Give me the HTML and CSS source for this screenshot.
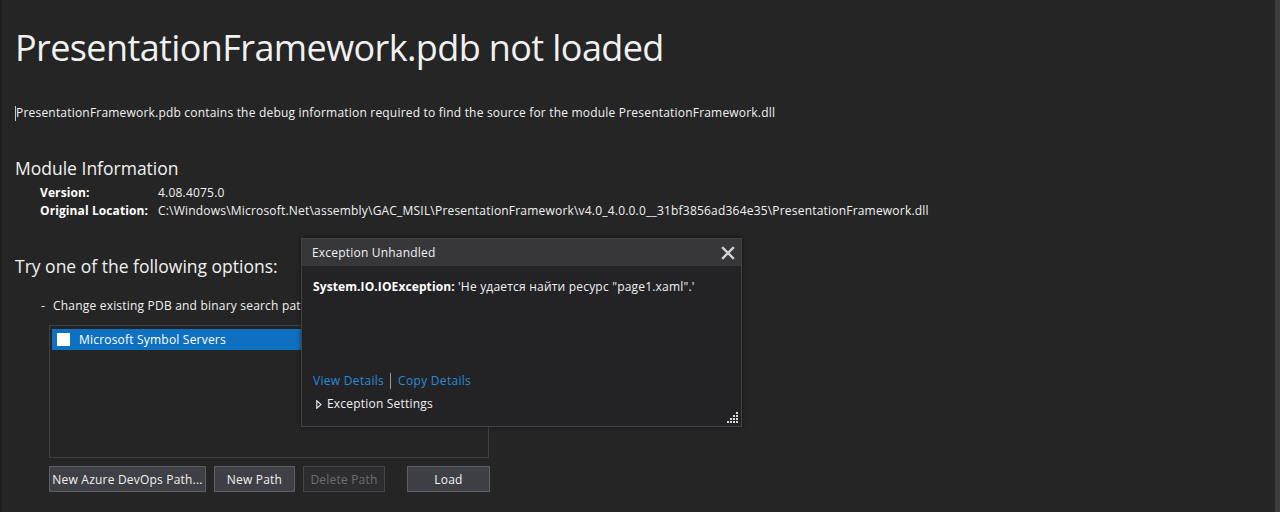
FILE: index.html
```html
<!DOCTYPE html>
<html lang="en">
<head>
<meta charset="utf-8">
<title>PresentationFramework.pdb not loaded</title>
<link rel="stylesheet" href="styles.css">
</head>
<body>
<div class="page">
  <h1 class="title">PresentationFramework.pdb not loaded</h1>
  <p class="desc"><span class="caret"></span>PresentationFramework.pdb contains the debug information required to find the source for the module PresentationFramework.dll</p>
  <h2 class="section module">Module Information</h2>
  <div class="info">
    <span class="label">Version:</span><span class="value">4.08.4075.0</span>
    <span class="label">Original Location:</span><span class="value">C:\Windows\Microsoft.Net\assembly\GAC_MSIL\PresentationFramework\v4.0_4.0.0.0__31bf3856ad364e35\PresentationFramework.dll</span>
  </div>
  <h2 class="section try">Try one of the following options:</h2>
  <div class="option"><span class="dash">-</span>Change existing PDB and binary search paths and retry loading:</div>
  <div class="listbox">
    <div class="item selected"><span class="check"></span><span class="item-text">Microsoft Symbol Servers</span></div>
  </div>
  <div class="buttons">
    <button class="btn azure">New Azure DevOps Path...</button>
    <button class="btn newpath">New Path</button>
    <button class="btn delete" disabled>Delete Path</button>
    <button class="btn load">Load</button>
  </div>
</div>

<div class="dialog">
  <div class="dialog-head">
    <span class="dialog-title">Exception Unhandled</span>
    <svg class="close" width="14" height="14" viewBox="0 0 14 14"><path d="M2 2 L12 12 M12 2 L2 12" stroke="#d4d4d4" stroke-width="2.4" stroke-linecap="square" fill="none"/></svg>
  </div>
  <div class="dialog-body">
    <p class="message"><b>System.IO.IOException:</b> 'Не удается найти ресурс "page1.xaml".'</p>
    <div class="links"><a class="link">View Details</a><span class="sep"></span><a class="link">Copy Details</a></div>
    <div class="settings"><svg class="tri" width="6" height="9" viewBox="0 0 6 9"><path d="M0.75 0.75 L5 4.5 L0.75 8.25 Z" fill="none" stroke="#e0e0e0" stroke-width="1.2"/></svg><span>Exception Settings</span></div>
    <svg class="grip" width="11" height="11" viewBox="0 0 11 11">
      <g fill="#d8d8d8">
        <rect x="9" y="0" width="2" height="2"/>
        <rect x="6" y="3" width="2" height="2"/><rect x="9" y="3" width="2" height="2"/>
        <rect x="3" y="6" width="2" height="2"/><rect x="6" y="6" width="2" height="2"/><rect x="9" y="6" width="2" height="2"/>
        <rect x="0" y="9" width="2" height="2"/><rect x="3" y="9" width="2" height="2"/><rect x="6" y="9" width="2" height="2"/><rect x="9" y="9" width="2" height="2"/>
      </g>
    </svg>
  </div>
</div>
</body>
</html>
```

FILE: styles.css
```css
html, body {
  margin: 0;
  padding: 0;
  height: 100%;
  background: #252526;
  overflow: hidden;
}

body {
  font-family: "Open Sans", "Noto Sans", sans-serif;
  color: #f1f1f1;
  letter-spacing: 0.2px;
}

.page {
  box-sizing: border-box;
  height: 512px;
  padding: 0 0 0 15px;
  border-left: 2px solid #1f1f20;
  border-right: 5px solid #3d3d40;
  display: flex;
  flex-direction: column;
  align-items: flex-start;
}

.title {
  margin: 24px 0 0 -2px;
  font-size: 36px;
  line-height: 48px;
  font-weight: 400;
  letter-spacing: -0.6px;
  color: #f1f1f1;
}

.desc {
  margin: 33px 0 0 -2px;
  font-size: 12px;
  line-height: 16px;
  height: 16px;
  color: #f1f1f1;
  display: flex;
  align-items: center;
  white-space: nowrap;
}

.caret {
  display: inline-block;
  width: 1px;
  height: 15px;
  background: #c8c8c8;
}

.section {
  margin: 0 0 0 -2px;
  font-size: 17.5px;
  line-height: 22px;
  font-weight: 400;
  letter-spacing: 0;
  color: #f1f1f1;
}

.module { margin-top: 36px; }
.try { margin-top: 35px; }

.info {
  margin: 5px 0 0 23px;
  display: grid;
  grid-template-columns: 118px auto;
  font-size: 12px;
  line-height: 18px;
  white-space: nowrap;
}

.label { font-weight: 700; color: #ffffff; letter-spacing: 0.1px; }
.value { color: #f1f1f1; }

.option {
  margin: 21px 0 0 24px;
  font-size: 12px;
  line-height: 16px;
  white-space: nowrap;
}

.dash { display: inline-block; width: 12px; }

.listbox {
  box-sizing: border-box;
  margin: 11px 0 0 32px;
  width: 440px;
  height: 133px;
  border: 1px solid #3f3f46;
  padding: 3px 2px;
}

.item {
  height: 21px;
  display: flex;
  align-items: center;
  font-size: 12px;
}

.selected { background: #0e70c0; color: #ffffff; }

.check {
  box-sizing: border-box;
  width: 13px;
  height: 13px;
  background: #ffffff;
  margin: 0 9px 0 5px;
}

.buttons {
  margin: 8px 0 0 32px;
  display: flex;
  gap: 8px;
}

.btn {
  box-sizing: border-box;
  height: 26px;
  padding: 0;
  font-family: inherit;
  font-size: 12px;
  letter-spacing: 0.2px;
  color: #f1f1f1;
  background: #3f3f46;
  border: 1px solid #5e5e63;
}

.azure { width: 157px; }
.newpath { width: 81px; }
.delete {
  width: 82px;
  background: #2d2d30;
  border-color: #46464a;
  color: #6d6d6d;
}
.load { width: 83px; margin-left: 14px; }

/* Exception popup */
.dialog {
  position: absolute;
  left: 301px;
  top: 238px;
  box-sizing: border-box;
  width: 441px;
  height: 189px;
  border: 1px solid #434346;
  background: #232325;
  display: flex;
  flex-direction: column;
  box-shadow: 0 0 4px rgba(0,0,0,0.5);
}

.dialog-head {
  height: 27px;
  background: #37373a;
  display: flex;
  align-items: center;
  justify-content: space-between;
  padding: 0 6px 0 10px;
  flex-shrink: 0;
}

.dialog-title { font-size: 12px; color: #f1f1f1; }

.close { display: block; }

.dialog-body {
  position: relative;
  flex: 1;
  padding: 0 0 0 11px;
  display: flex;
  flex-direction: column;
  align-items: flex-start;
}

.message {
  margin: 13px 0 0 0;
  font-size: 12px;
  line-height: 16px;
  color: #f1f1f1;
}

.message b { color: #ffffff; letter-spacing: 0.1px; }

.links {
  margin: 78px 0 0 0;
  display: flex;
  align-items: center;
  font-size: 12px;
  line-height: 16px;
  letter-spacing: 0.3px;
}

.link { color: #2a8ad6; }

.sep {
  display: inline-block;
  width: 1px;
  height: 16px;
  background: #9a9a9a;
  margin: 0 7px 0 6px;
}

.settings {
  margin: 7px 0 0 3px;
  display: flex;
  align-items: center;
  gap: 5px;
  font-size: 12px;
  line-height: 16px;
  color: #f1f1f1;
}

.tri { display: block; }

.grip {
  position: absolute;
  right: 3px;
  bottom: 3px;
}
```
